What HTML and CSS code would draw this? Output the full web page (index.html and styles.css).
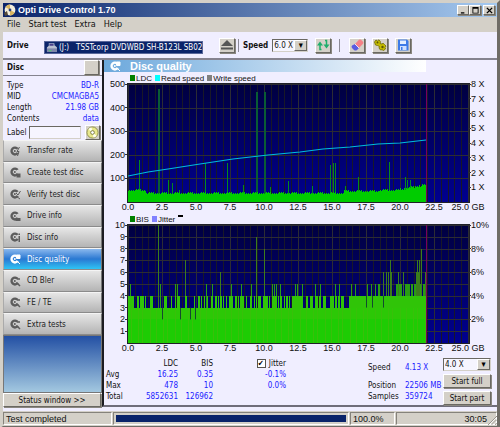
FILE: index.html
```html
<!DOCTYPE html>
<html lang="en">

<head>
    <meta charset="UTF-8">
    <meta name="viewport" content="width=device-width, initial-scale=1.0">
    <title>Opti Drive Control 1.70</title>
    <link rel="stylesheet" href="styles.css">
</head>

<body>
    <svg class="defs" width="0" height="0" aria-hidden="true">
        <symbol id="disc" viewBox="0 0 12 12">
            <path d="M9.6 3.2A4.6 4.6 0 1 0 9.8 8.6L7.6 7.2A2.1 2.1 0 1 1 7.4 4.4Z" fill="currentColor" />
            <circle cx="5.8" cy="5.9" r="1" fill="currentColor" />
        </symbol>
    </svg>

    <div class="window">
        <header class="titlebar">
            <svg class="app-icon" viewBox="0 0 12 12">
                <circle cx="6" cy="6" r="5.4" fill="#f4efdc" />
                <path d="M6 6L1.500 3A5.400 5.400 0 0 1 6 .6ZM6 6L10.800 8.500A5.400 5.400 0 0 1 6 11.400Z" fill="#d9b660" />
                <circle cx="6" cy="6" r="1.4" fill="#27417f" />
                <path d="M0 9l3-2 1 4-3 1z" fill="#554a3a" />
            </svg>
            <h1>Opti Drive Control 1.70</h1>
            <button class="win-btn" aria-label="Minimize"><svg viewBox="0 0 8 8"><path d="M1 6h4v1.500H1z" /></svg></button>
            <button class="win-btn" aria-label="Maximize"><svg viewBox="0 0 8 8"><path d="M.5 0h7v7.500h-7zM1.500 2v4.500h5V2z" fill-rule="evenodd" /></svg></button>
            <button class="win-btn close" aria-label="Close"><svg viewBox="0 0 8 8"><path d="M1 1l6 6M7 1l-6 6" stroke="#000" stroke-width="1.600" /></svg></button>
        </header>

        <nav class="menubar">
            <button>File</button>
            <button>Start test</button>
            <button>Extra</button>
            <button>Help</button>
        </nav>

        <div class="toolbar">
            <label class="drive-label" for="drive">Drive</label>
            <div class="drive">
                <svg viewBox="0 0 12 12">
                    <path d="M3 1h6l1 4H3z" fill="#8896b8" />
                    <path d="M1 6l2-2h7l2 2v4H1z" fill="#b9bfd0" />
                    <path d="M1 7h11v4H1z" fill="#7d86a8" />
                    <path d="M4 2h4v2H4z" fill="#4a3f8a" />
                    <path d="M3 9h3v1H3z" fill="#4fd26a" />
                </svg>
                <select id="drive">
                    <option>(J:)&nbsp;&nbsp; TSSTcorp DVDWBD SH-B123L SB02</option>
                </select>
            </div>
            <button class="tool" aria-label="Eject"><svg viewBox="0 0 14 12"><path d="M7 1l6 6H1z" fill="#555" /><path d="M1 8.500h12v2H1z" fill="#555" /></svg></button>
            <span class="divider"></span>
            <label class="speed-label" for="speed">Speed</label>
            <div class="combo speed">
                <select id="speed">
                    <option>6.0 X</option>
                </select>
            </div>
            <button class="tool refresh" aria-label="Refresh"><svg viewBox="0 0 14 12"><path d="M5.500 10.500H4V6M9 1.500h1.500V6" fill="none" stroke="#1fae6c" stroke-width="1.500" /><path d="M1 6.500L4 2.500l3 4zM7.500 5.500h6l-3 4z" fill="#1fae6c" /></svg></button>
            <span class="divider"></span>
            <button class="tool eraser" aria-label="Erase"><svg viewBox="0 0 14 12"><path d="M5 5L9 .8q1-.8 2 0l2 2q.8 1 0 2L9 9z" fill="#f58088" /><path d="M5 5l4 4-2 2q-1.500 1-3 0L2 9q-1-1.500 0-2.500z" fill="#5a5be0" /><path d="M5 5l4 4" stroke="#fff" stroke-width=".8" /></svg></button>
            <button class="tool" aria-label="Settings"><svg viewBox="0 0 14 12"><path d="M1.500 3l1.500-2 1.500 1L6 .8l1.500 2L7 4.500l2 .5 1-.8 1.500 1.300 1.500 1.500-1 1.500.5 1.500-2 1.500-1.500-.8L7.500 11 6 9l.5-1.500-2-1L2.500 6z" fill="#c6bd00" stroke="#6f6a00" stroke-width=".8" /><circle cx="4.500" cy="3.600" r="1" fill="#5d5800" /><circle cx="9.500" cy="8" r="1.200" fill="#5d5800" /></svg></button>
            <button class="tool" aria-label="Save"><svg viewBox="0 0 14 12"><path d="M2 .5h9l1.500 1.500v9.500H2z" fill="#3d7be8" /><path d="M4 1.500h6v3.500H4z" fill="#e4efff" /><path d="M4 7h6.500v4H4z" fill="#cfe0ff" /><path d="M5 8h1.500v3H5z" fill="#3d7be8" /></svg></button>
        </div>

        <div class="workspace">
            <aside class="sidebar">
                <div class="disc-head">
                    <h2>Disc</h2>
                    <button aria-label="Disc menu"></button>
                </div>
                <dl class="disc-info">
                    <dt>Type</dt>
                    <dd>BD-R</dd>
                    <dt>MID</dt>
                    <dd>CMCMAGBA5</dd>
                    <dt>Length</dt>
                    <dd>21.98 GB</dd>
                    <dt>Contents</dt>
                    <dd>data</dd>
                </dl>
                <div class="disc-label">
                    <label for="label">Label</label>
                    <input id="label" type="text">
                    <button aria-label="Read label"><svg viewBox="0 0 14 14"><circle cx="7" cy="7" r="6" fill="#e9e88c" stroke="#8d8c4a" /><path d="M7 7L2.500 3.500A5.500 5.500 0 0 1 6 1.500zM7 7l4.500 3.500A5.500 5.500 0 0 1 8 12.500z" fill="#fffff0" /><circle cx="7" cy="7" r="2" fill="#fff" stroke="#77763c" /></svg></button>
                </div>
                <nav class="tests">
                    <button><svg viewBox="0 0 12 12"><use href="#disc" /><path d="M10.500 2L8 6.500h2L8.500 11" fill="none" stroke="currentColor" /></svg>Transfer rate</button>
                    <button><svg viewBox="0 0 12 12"><use href="#disc" /><path d="M7.500 7.500h4v4h-4z" fill="currentColor" /></svg>Create test disc</button>
                    <button><svg viewBox="0 0 12 12"><use href="#disc" /><path d="M7 5l2 2 2.500-4M7 8l4 3" fill="none" stroke="currentColor" /></svg>Verify test disc</button>
                    <button><svg viewBox="0 0 12 12"><use href="#disc" /><path d="M6.500 8h5v3h-5z" fill="currentColor" /></svg>Drive info</button>
                    <button><svg viewBox="0 0 12 12"><use href="#disc" /><path d="M9.500 5h1.500v6H9.500zM9.500 2.500H11V4H9.500z" fill="currentColor" /></svg>Disc info</button>
                    <button class="active"><svg viewBox="0 0 12 12"><use href="#disc" /><path d="M7.500 2h3.500v3.500H7.500zM8 8l3 3" fill="currentColor" stroke="currentColor" /></svg>Disc quality</button>
                    <button><svg viewBox="0 0 12 12"><use href="#disc" /><path d="M7.500 7.500l3.500 3.500M8 4h3" stroke="currentColor" stroke-width="1.500" /></svg>CD Bler</button>
                    <button><svg viewBox="0 0 12 12"><use href="#disc" /><path d="M7.500 7.500l3.500 3.500M8 4h3" stroke="currentColor" stroke-width="1.500" /></svg>FE / TE</button>
                    <button><svg viewBox="0 0 12 12"><use href="#disc" /><path d="M7.500 7.500l3.500 3.500M8 4h3" stroke="currentColor" stroke-width="1.500" /></svg>Extra tests</button>
                </nav>
                <div class="filler"></div>
                <button class="status-toggle">Status window &gt;&gt;</button>
            </aside>

            <main class="panel">
                <div class="panel-head">
                    <svg viewBox="0 0 12 12"><use href="#disc" /><path d="M7.500 2h3.500v3.500H7.500zM8 8l3 3" fill="currentColor" stroke="currentColor" /></svg>
                    <h2>Disc quality</h2>
                </div>

                <section class="chart">
                    <div class="legend">
                        <span class="key ldc">LDC</span>
                        <span class="key read">Read speed</span>
                        <span class="key write">Write speed</span>
                    </div>
                    <div class="plot">
                        <div class="axis left">
                            <span>500</span><span>400</span><span>300</span><span>200</span><span>100</span>
                        </div>
                        <svg id="ldc" viewBox="0 0 341 118" preserveAspectRatio="none"></svg>
                        <div class="axis right">
                            <span>8 X</span><span>7 X</span><span>6 X</span><span>5 X</span><span>4 X</span><span>3 X</span><span>2 X</span><span>1 X</span>
                        </div>
                    </div>
                    <div class="ticks">
                        <span>0.0</span><span>2.5</span><span>5.0</span><span>7.5</span><span>10.0</span><span>12.5</span><span>15.0</span><span>17.5</span><span>20.0</span><span>22.5</span><span>25.0 GB</span>
                    </div>
                </section>

                <section class="chart">
                    <div class="legend">
                        <span class="key ldc">BIS</span>
                        <span class="key jitter">Jitter</span>
                        <span class="dash"></span>
                    </div>
                    <div class="plot">
                        <div class="axis left">
                            <span>10</span><span>9</span><span>8</span><span>7</span><span>6</span><span>5</span><span>4</span><span>3</span><span>2</span><span>1</span>
                        </div>
                        <svg id="bis" viewBox="0 0 341 118" preserveAspectRatio="none"></svg>
                        <div class="axis right">
                            <span>10%</span><span>8%</span><span>6%</span><span>4%</span><span>2%</span>
                        </div>
                    </div>
                    <div class="ticks">
                        <span>0.0</span><span>2.5</span><span>5.0</span><span>7.5</span><span>10.0</span><span>12.5</span><span>15.0</span><span>17.5</span><span>20.0</span><span>22.5</span><span>25.0 GB</span>
                    </div>
                </section>

                <div class="results">
                    <table>
                        <thead>
                            <tr>
                                <th class="name"></th>
                                <th class="sum">LDC</th>
                                <th class="bis">BIS</th>
                                <th class="jit"><label><input type="checkbox" checked> Jitter</label></th>
                            </tr>
                        </thead>
                        <tbody>
                            <tr><th>Avg</th><td>16.25</td><td>0.35</td><td>-0.1%</td></tr>
                            <tr><th>Max</th><td>478</td><td>10</td><td>0.0%</td></tr>
                            <tr><th>Total</th><td>5852631</td><td>126962</td><td></td></tr>
                        </tbody>
                    </table>
                    <dl class="readout">
                        <dt>Speed</dt>
                        <dd>4.13 X</dd>
                        <dt>Position</dt>
                        <dd>22506 MB</dd>
                        <dt>Samples</dt>
                        <dd>359724</dd>
                    </dl>
                    <div class="actions">
                        <div class="combo">
                            <select aria-label="Test speed">
                                <option>4.0 X</option>
                            </select>
                        </div>
                        <button>Start full</button>
                        <button>Start part</button>
                    </div>
                </div>
            </main>
        </div>

        <footer class="statusbar">
            <span class="cell message">Test completed</span>
            <div class="cell progress"><div class="bar" style="width: 100%"></div></div>
            <span class="cell percent">100.0%</span>
            <span class="cell time">30:05</span>
            <svg class="grip" viewBox="0 0 10 10"><path d="M0 10L10 0M4 10l6-6M8 10l2-2" stroke="#848078" /><path d="M1 10l9-9M5 10l5-5" stroke="#fff" /></svg>
        </footer>
    </div>

    <script src="charts.js"></script>
</body>

</html>
```

FILE: styles.css
```css
* {
    box-sizing: border-box;
}

body {
    margin: 0;
    font-family: "DejaVu Sans Condensed", "DejaVu Sans", sans-serif;
    font-size: 8px;
    line-height: 11px;
    color: #111;
    background: #d4d0c8;
}

h1,
h2,
dl,
dd {
    margin: 0;
}

button,
input,
select {
    font: inherit;
    color: inherit;
    margin: 0;
    padding: 0;
}

.defs {
    display: block;
}

.window {
    display: flex;
    flex-direction: column;
    min-height: 100vh;
    background: #f0eeff;
    border: 3px solid #d4d0c8;
    border-right-color: #6f6c66;
    border-bottom: 2px solid #6f6c66;
}

/* title bar */

.titlebar {
    display: flex;
    align-items: center;
    height: 14px;
    padding: 0 2px 0 1px;
    background: linear-gradient(to right, #0a246a, #a6caf0);
    color: #fff;
}

.app-icon {
    width: 12px;
    height: 12px;
    margin-right: 2px;
}

.titlebar h1 {
    flex: 1;
    font: bold 9px/14px "Liberation Sans", sans-serif;
}

.win-btn,
.tool,
.disc-head button,
.disc-label button,
.status-toggle,
.actions button {
    background: #d4d0c8;
    border: 1px solid;
    border-color: #fff #6a6862 #6a6862 #fff;
    box-shadow: 1px 1px 0 #8a8780;
}

.win-btn {
    width: 12px;
    height: 10px;
    line-height: 0;
}

.win-btn.close {
    margin-left: 2px;
}

.win-btn svg {
    width: 7px;
    height: 7px;
}

/* menu */

.menubar {
    display: flex;
    gap: 8px;
    height: 15px;
    padding-left: 4px;
    background: #d4d0c8;
}

.menubar button {
    border: 0;
    background: none;
    font-size: 9px;
}

/* toolbar */

.toolbar {
    display: flex;
    align-items: center;
    height: 28px;
    padding-left: 4px;
    border-bottom: 2px solid #85838f;
}

.toolbar label {
    font-weight: bold;
}

.drive-label {
    width: 37px;
}

.drive {
    display: flex;
    align-items: center;
    width: 159px;
    height: 13px;
    margin: 4px 16px 0 0;
    padding-left: 1px;
    background: #0a246a;
    border: 1px solid #58679a;
    color: #fff;
}

.drive svg {
    width: 11px;
    height: 11px;
    margin-right: 2px;
}

.drive select,
.combo select {
    flex: 1;
    min-width: 0;
    border: 0;
    background: none;
    appearance: none;
}

.tool {
    width: 16px;
    height: 15px;
    line-height: 0;
}

.tool svg {
    width: 14px;
    height: 12px;
}

.divider {
    width: 1px;
    height: 13px;
    margin: 0 4px 0 3px;
    background: #8d8b98;
}

.combo {
    display: flex;
    align-items: stretch;
    height: 13px;
    padding-left: 1px;
    background: #f6f5ff;
    border: 1px solid;
    border-color: #6a6862 #d4d0c8 #d4d0c8 #6a6862;
}

.combo::after {
    content: "▾";
    width: 11px;
    background: #d4d0c8;
    border: 1px solid;
    border-color: #fff #6a6862 #6a6862 #fff;
    color: #000;
    text-align: center;
    line-height: 9px;
    font-size: 9px;
    pointer-events: none;
}

.combo.speed {
    width: 36px;
    margin: 0 7px 0 4px;
}

.refresh + .divider {
    margin: 0 9px 0 8px;
}

.eraser,
.eraser + .tool {
    margin-right: 7px;
}

/* left column */

.workspace {
    display: flex;
    flex: 1;
}

.sidebar {
    display: flex;
    flex-direction: column;
    width: 99px;
    margin-bottom: 4px;
}

.disc-head {
    display: flex;
    align-items: center;
    justify-content: space-between;
    height: 16px;
    padding: 0 3px 0 4px;
    border-bottom: 1px solid #85838f;
}

.disc-head h2 {
    font-size: 8px;
}

.disc-head button {
    width: 15px;
    height: 15px;
}

.disc-info {
    display: grid;
    grid-template-columns: auto 1fr;
    row-gap: 0;
    padding: 4px 3px 0 4px;
}

.disc-info dd {
    text-align: right;
}

.disc-info dd,
.readout dd,
.results td {
    color: #1a1aff;
}

.disc-label {
    display: flex;
    align-items: center;
    height: 16px;
    padding: 0 2px 0 4px;
}

.disc-label input {
    flex: 1;
    min-width: 0;
    height: 13px;
    margin: 0 4px 0 3px;
    background: #f6f5ff;
    border: 1px solid;
    border-color: #6a6862 #d4d0c8 #d4d0c8 #6a6862;
}

.disc-label button {
    width: 15px;
    height: 15px;
    line-height: 0;
}

.disc-label svg {
    width: 13px;
    height: 13px;
}

.tests {
    display: grid;
    grid-auto-rows: 1fr;
    height: 195px;
}

.tests button {
    display: flex;
    align-items: center;
    gap: 6px;
    padding-left: 5px;
    border: 1px solid;
    border-color: #f4f4f4 #777 #8b8b8b #aaa;
    background: linear-gradient(#e6e6e6, #b4b4b4);
    color: #222;
}

.tests svg,
.panel-head svg {
    width: 12px;
    height: 12px;
    color: #5c5c5c;
}

.tests .active {
    background: linear-gradient(#8ab8ee, #2a78d2 50%, #2fc4f4);
    color: #fff;
}

.tests .active svg,
.panel-head svg {
    color: #fff;
}

.filler {
    flex: 1;
    border: 1px solid #777;
    background: linear-gradient(#2350a4, #a3c8e0);
}

.status-toggle {
    height: 14px;
    margin-right: 1px;
}

/* main panel */

.panel {
    flex: 1;
    min-width: 0;
    margin-bottom: 4px;
    border-left: 2px solid #1c1c22;
    border-bottom: 2px solid #6f6d7a;
}

.panel-head {
    display: flex;
    align-items: center;
    width: 82%;
    height: 12px;
    padding-left: 5px;
    background: linear-gradient(to right, #6ca8dc, #fff);
    color: #fff;
}

.panel-head svg {
    margin-right: 9px;
}

.panel-head h2 {
    font: bold 11px/12px "Liberation Sans", sans-serif;
}

.chart {
    font: 9px/10px "Liberation Sans", sans-serif;
}

.legend {
    display: flex;
    gap: 3px;
    height: 12px;
    padding: 2px 0 0 26px;
    font-size: 8px;
}

.key::before {
    content: "";
    display: inline-block;
    width: 5px;
    height: 6px;
    margin-right: 1px;
}

.ldc::before {
    background: #008000;
}

.read::before {
    background: #00ffff;
}

.write::before {
    background: #808080;
}

.jitter::before {
    background: #8080ff;
}

.dash {
    width: 5px;
    height: 2px;
    background: #000;
}

.plot {
    display: flex;
    height: 118px;
}

.plot svg {
    flex: 1;
    min-width: 0;
    height: 118px;
    background: linear-gradient(#000040, #000090);
    outline: 1px solid #202028;
}

.axis {
    display: grid;
    grid-auto-rows: 1fr;
    margin: -5px 0 5px;
}

.axis span {
    display: flex;
    align-items: center;
    height: 10px;
}

.left {
    width: 24px;
}

.left span {
    justify-content: flex-end;
}

.left span::after,
.right span::before {
    content: "";
    width: 3px;
    height: 1px;
    background: #333;
}

.right {
    width: 28px;
}

.right span::before {
    width: 2px;
}

.ticks {
    display: grid;
    grid-template-columns: repeat(11, 1fr);
    height: 11px;
    margin: 0 12px 0 7px;
    text-align: center;
    white-space: nowrap;
}

/* figures below the charts */

.results {
    display: flex;
    justify-content: space-between;
    padding: 4px 6px 0 2px;
}

.results table {
    align-self: start;
    border-collapse: collapse;
}

.results th,
.results td {
    height: 11px;
    padding: 0;
    font-weight: normal;
    text-align: right;
}

.results tbody th {
    text-align: left;
}

.name {
    width: 26px;
}

.sum {
    width: 46px;
}

.bis {
    width: 35px;
}

.jit {
    width: 73px;
}

.jit label {
    display: flex;
    align-items: center;
    justify-content: flex-end;
    gap: 3px;
}

.jit input {
    width: 9px;
    height: 9px;
    appearance: none;
    background: #fff;
    border: 1px solid #55534e;
}

.jit input:checked::before {
    content: "✔";
    display: block;
    font-size: 8px;
    line-height: 7px;
    color: #000;
}

.readout {
    display: grid;
    grid-template-columns: 37px 38px;
    grid-template-rows: 18px 11px 11px;
    padding-top: 4px;
    margin-left: auto;
    white-space: nowrap;
}

.actions {
    display: flex;
    flex-direction: column;
    gap: 3px;
    width: 48px;
}

.actions button {
    height: 14px;
}

/* status bar */

.statusbar {
    display: flex;
    align-items: center;
    gap: 1px;
    height: 15px;
    background: #d4d0c8;
    font: 9px/12px "Liberation Sans", sans-serif;
    position: relative;
}

.cell {
    height: 13px;
    padding: 0 2px;
    border: 1px solid;
    border-color: #85827b #fff #fff #85827b;
}

.message {
    width: 109px;
}

.progress {
    flex: 1;
    padding: 2px;
}

.bar {
    height: 7px;
    background: #0a246a;
}

.percent {
    width: 45px;
}

.time {
    width: 101px;
    padding-right: 9px;
    text-align: right;
}

.grip {
    position: absolute;
    right: 0;
    bottom: 1px;
    width: 9px;
    height: 9px;
}
```

FILE: charts.js
```js
const NS = "http://www.w3.org/2000/svg";
const WIDTH = 341;
const HEIGHT = 118;
const END = 298; // last recorded column

function add(svg, tag, attrs) {
    const el = document.createElementNS(NS, tag);
    for (const key in attrs) el.setAttribute(key, attrs[key]);
    svg.appendChild(el);
}

function bar(svg, x, height, color, width = 1) {
    add(svg, "rect", { x: x, y: HEIGHT - height, width: width, height: height, fill: color, "shape-rendering": "crispEdges" });
}

function grid(svg, rows, color, major) {
    for (let i = 0; i <= 50; i++) {
        add(svg, "path", { d: `M${Math.round(i * 6.8) + 0.5} 0V${HEIGHT}`, stroke: i % 5 ? color : major });
    }
    for (let i = 0; i < rows; i++) {
        add(svg, "path", { d: `M0 ${Math.round(i * HEIGHT / rows) + 0.5}H${WIDTH}`, stroke: major });
    }
}

// LDC
const ldc = document.getElementById("ldc");
const ldcSpikes = [
    [11, 42], [30, 113], [40, 22], [44, 19], [51, 12], [77, 39], [99, 39], [115, 17], [128, 110], [136, 110],
    [142, 15], [160, 21], [184, 16], [202, 37], [205, 39], [207, 39], [217, 16], [230, 25], [261, 40], [277, 25], [279, 22], [282, 22]
];

grid(ldc, 5, "#181828", "#2c2c34");
ldcSpikes.forEach(([x, h]) => bar(ldc, x, h, h > 100 ? "#0a5c34" : "#068a1c", h > 100 ? 2 : 1));
for (let x = 0; x < END; x++) {
    const noise = (x * 7919 % 13) % 4;
    let h = 8;
    if (x < 18) h = 11;
    if (x > 215) h = 10;
    if (x > 250) h = 11;
    if (x > 270) h = 11 + (x - 270) / 5;
    bar(ldc, x, Math.round(h + noise * 0.7), "#00cc00");
}
add(ldc, "polyline", {
    points: "0,92 20,88 40,85 72,80 105,75 140,71 172,68 195,65 222,63 250,60 272,59 298,56",
    fill: "none", stroke: "#00bcdc", "stroke-width": 1.2
});
bar(ldc, END, HEIGHT, "#780060");

// BIS
const bis = document.getElementById("bis");
const step = HEIGHT / 10;
const four = [
    [0, 6], [9, 2], [12, 4], [17, 1], [22, 3], [36, 3], [43, 1], [47, 1], [49, 3], [57, 2], [66, 1], [70, 2], [73, 1],
    [76, 1], [79, 1], [83, 2], [87, 2], [90, 1], [92, 2], [95, 1], [98, 1], [101, 4], [107, 2], [110, 1], [112, 4],
    [118, 1], [122, 2], [126, 1], [128, 1], [130, 3], [135, 5], [141, 1], [144, 5], [150, 1], [152, 2], [156, 1],
    [158, 2], [161, 1], [164, 11], [178, 2], [182, 3], [187, 3], [191, 2], [195, 3], [202, 4], [207, 2], [210, 2],
    [213, 3], [221, 77]
];
const fiveUp = [
    [2, 5], [30, 10], [32, 5], [47, 5], [49, 5], [57, 7], [78, 5], [84, 5], [92, 6], [103, 5], [113, 5], [123, 5],
    [128, 9], [136, 8], [144, 5], [146, 5], [148, 5], [152, 5], [167, 5], [169, 5], [174, 5], [187, 5], [192, 5],
    [207, 5], [211, 5], [223, 5], [227, 5], [239, 5], [243, 5], [247, 5], [250, 5], [251, 5], [255, 6], [258, 6],
    [260, 6], [262, 7], [263, 6], [268, 5], [269, 5], [270, 6], [271, 5], [272, 5], [273, 5], [275, 6], [277, 5],
    [278, 5], [279, 5], [280, 5], [281, 5], [283, 5], [284, 5], [286, 5], [287, 5], [288, 6], [289, 7], [290, 6],
    [291, 7], [292, 5], [293, 8], [295, 5], [296, 5], [297, 6]
];
const dips = [[34, 2], [52, 2], [62, 2], [67, 2], [238, 3], [244, 3], [255, 3]];

grid(bis, 10, "#181828", "#2c2c34");
fiveUp.forEach(([x, n]) => bar(bis, x, n * step, n > 5 ? "#3c7c1c" : "#2a9c14"));
four.forEach(([x, w]) => bar(bis, x, 4 * step, "#30c408", w));
bar(bis, 0, 3 * step, "#2cc806", END);
bar(bis, 0, 2 * step, "#1ecc04", END);
for (let x = 3; x < END; x += 4 + x % 5) {
    bar(bis, x, 3 * step, "#38c00a");
}
dips.forEach(([x, n]) => {
    add(bis, "rect", { x: x, y: HEIGHT - (n + 1) * step, width: 1, height: step, fill: "#124a30" });
});
bar(bis, END, HEIGHT, "#780060");
```
